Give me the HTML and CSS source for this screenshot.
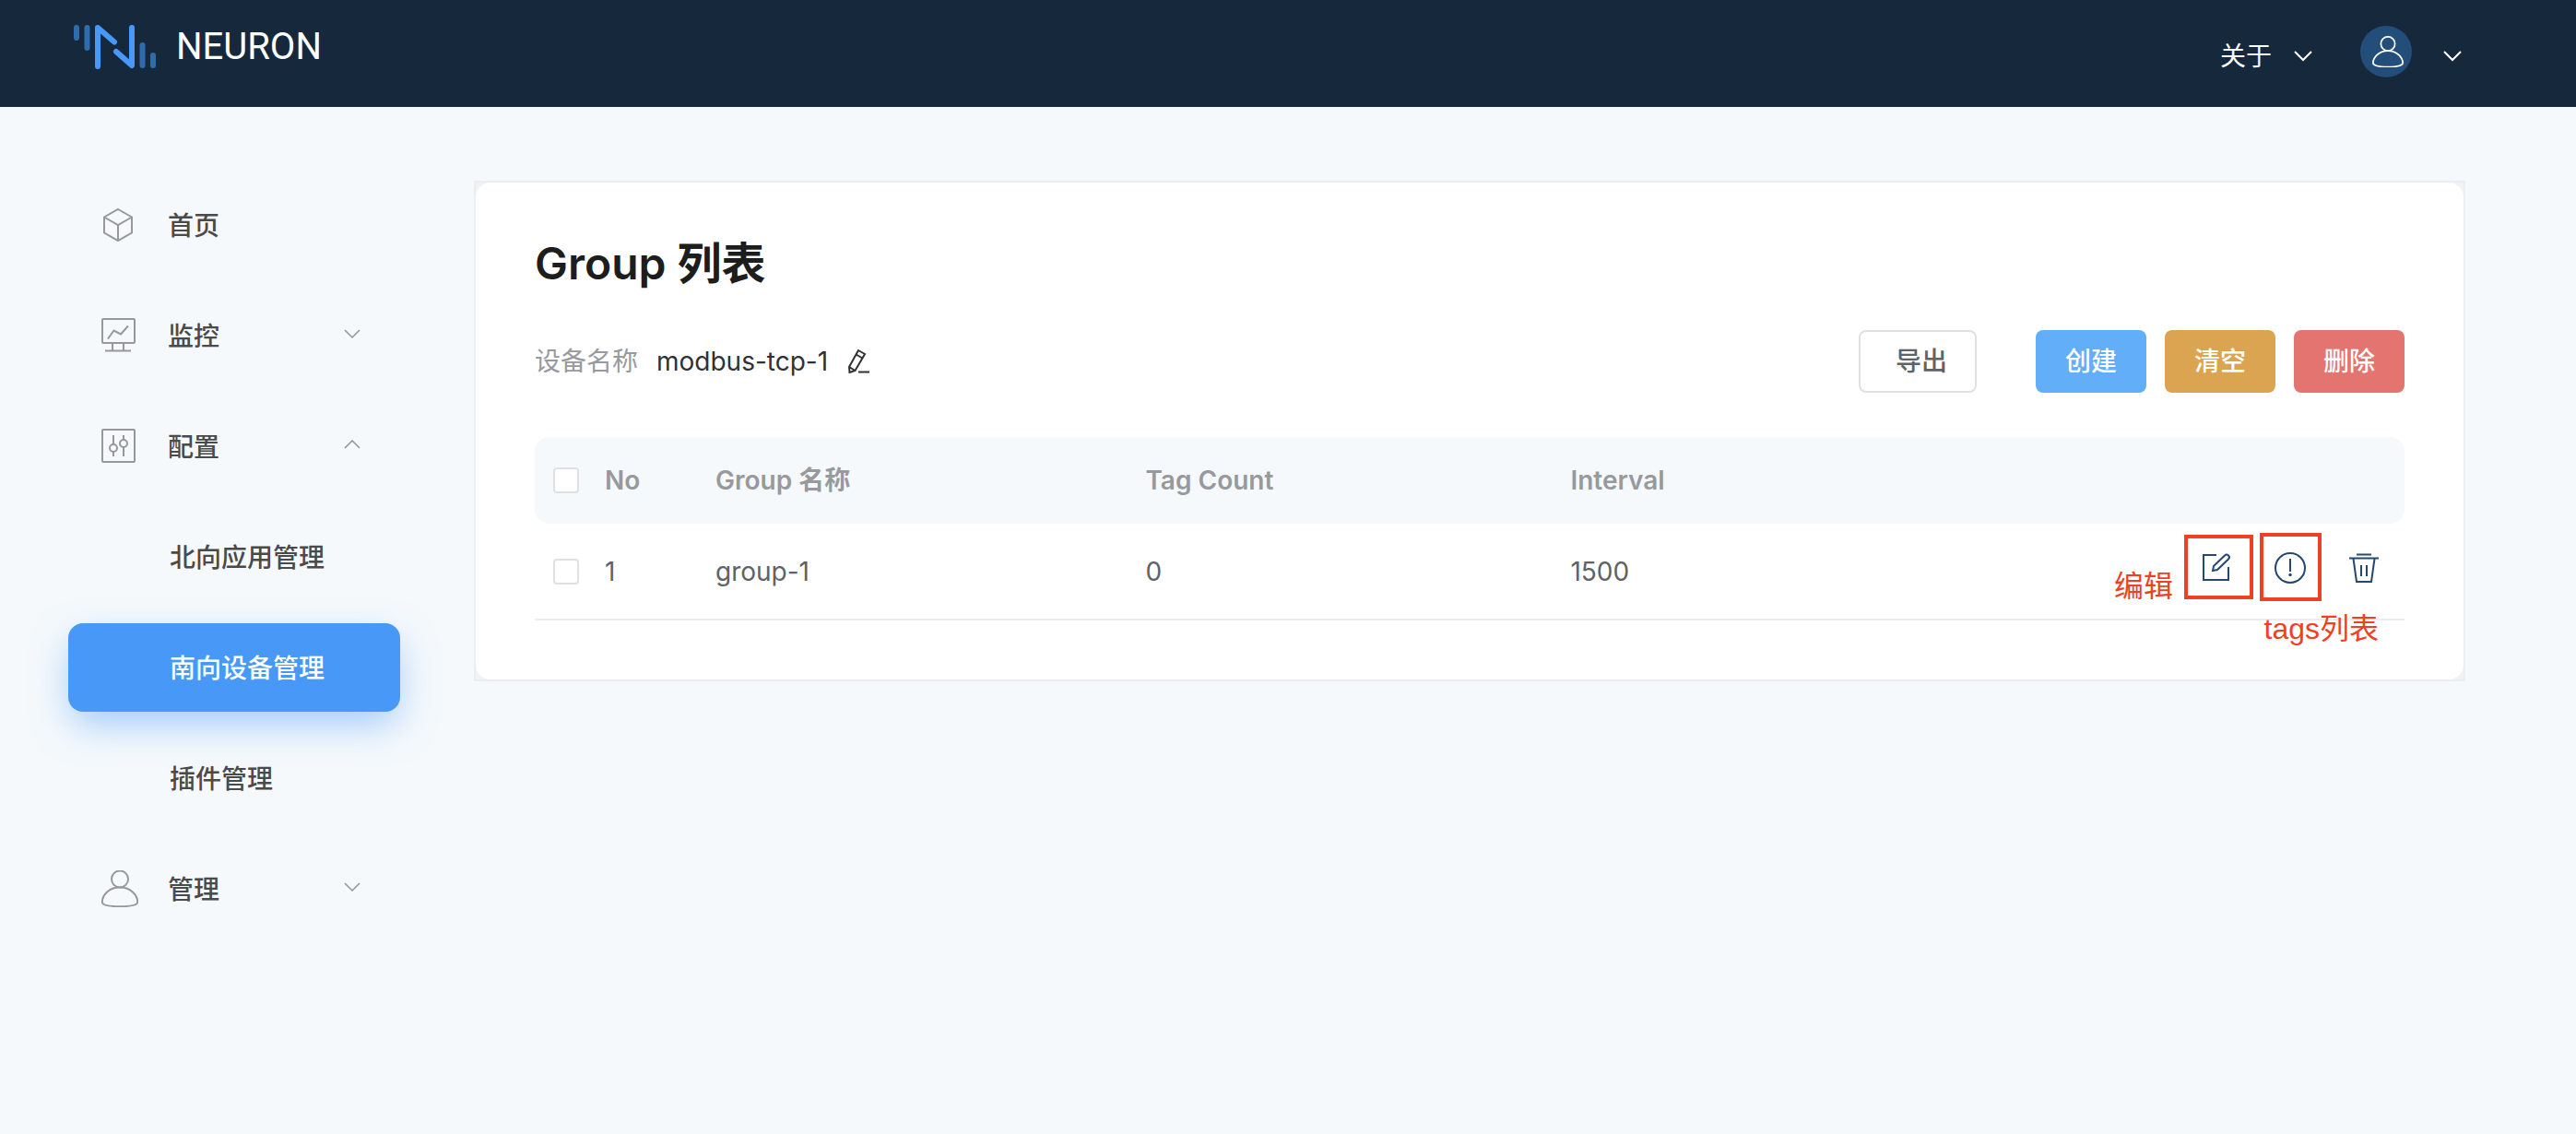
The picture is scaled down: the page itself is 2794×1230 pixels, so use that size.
FILE: index.html
```html
<!DOCTYPE html>
<html lang="zh-CN">
<head>
<meta charset="utf-8">
<meta name="viewport" content="width=device-width, initial-scale=1">
<title>Neuron</title>
<link rel="stylesheet" href="styles.css">
</head>
<body>
<header class="topbar">
  <a class="brand" href="#">
    <svg class="brand-mark" viewBox="0 0 90 48" fill="none" stroke-width="6" stroke-linecap="round" stroke-linejoin="round" aria-hidden="true">
      <path stroke="#306bab" d="M3 3v11M14.500 3v22M74.500 22v22M86 33v11"/>
      <path stroke="#4899f7" d="M26 45V3l18 15.500M46 29l17 15V3"/>
    </svg>
    <span>NEURON</span>
  </a>
  <div class="topbar-menus">
    <button class="menu-button about" type="button">关于
      <svg class="chevron" viewBox="0 0 20 12" aria-hidden="true"><path d="M1 1l9 9 9-9"/></svg>
    </button>
    <button class="menu-button account" type="button" aria-label="Account">
      <span class="avatar">
        <svg viewBox="0 0 40 40" aria-hidden="true"><circle cx="20" cy="10" r="9"/><path d="M20 19C8 19 1 28 1 34.500C1 37 6 39.500 20 39.500S39 37 39 34.500C39 28 32 19 20 19z"/></svg>
      </span>
      <svg class="chevron" viewBox="0 0 20 12" aria-hidden="true"><path d="M1 1l9 9 9-9"/></svg>
    </button>
  </div>
</header>
<div class="layout">
  <nav class="sidebar">
    <a class="nav-item" href="#">
      <svg class="nav-icon" viewBox="0 0 40 40" aria-hidden="true"><path d="M18 3l15 8.500v17L18 37 3 28.500v-17zM3 11.500L18 20l15-8.500M18 20v17"/></svg>
      <span>首页</span>
    </a>
    <a class="nav-item" href="#">
      <svg class="nav-icon" viewBox="0 0 40 40" aria-hidden="true"><rect x="1" y="2" width="35" height="26" rx="1"/><path d="M12 28v8.500h12V28M4 36.500h28M7 23.500l6.500-9 7.500 4 8-9"/></svg>
      <span>监控</span>
      <svg class="nav-chevron" viewBox="0 0 20 12" aria-hidden="true"><path stroke-width="1.5" d="M2 1l8 8 8-8"/></svg>
    </a>
    <a class="nav-item" href="#">
      <svg class="nav-icon" viewBox="0 0 40 40" aria-hidden="true"><rect x="1" y="2" width="35" height="35" rx="1"/><path d="M13 8v10M13 26v5M24 8v5M24 21v10"/><circle cx="13" cy="22" r="4"/><circle cx="24" cy="17" r="4"/></svg>
      <span>配置</span>
      <svg class="nav-chevron" viewBox="0 0 20 12" aria-hidden="true"><path stroke-width="1.5" d="M2 9l8-8 8 8"/></svg>
    </a>
    <a class="nav-item nav-child" href="#">北向应用管理</a>
    <a class="nav-item nav-child active" href="#" aria-current="page">南向设备管理</a>
    <a class="nav-item nav-child" href="#">插件管理</a>
    <a class="nav-item" href="#">
      <svg class="nav-icon" viewBox="0 0 40 40" aria-hidden="true"><circle cx="20" cy="9.500" r="9"/><path d="M20 18.500C8 18.500 .800 27 .800 34.500C.800 37.500 7 39.200 20 39.200S39.200 37.500 39.200 34.500C39.200 27 32 18.500 20 18.500z"/></svg>
      <span>管理</span>
      <svg class="nav-chevron" viewBox="0 0 20 12" aria-hidden="true"><path stroke-width="1.5" d="M2 1l8 8 8-8"/></svg>
    </a>
  </nav>
  <main class="card">
    <div class="card-body">
      <h1>Group 列表</h1>
      <div class="toolbar">
        <span class="device-label">设备名称</span>
        <span class="device-name">modbus-tcp-1</span>
        <button class="icon-button rename" type="button" aria-label="Rename">
          <svg viewBox="0 0 24 26" aria-hidden="true"><path d="M11 1l7 4-10.500 18-6 2-.500-6zM8.500 5.500l7 4M1 19l6.500 4M11 24.500h12"/></svg>
        </button>
        <div class="actions">
          <button class="btn btn-plain" type="button">导出</button>
          <button class="btn btn-primary" type="button">创建</button>
          <button class="btn btn-warning" type="button">清空</button>
          <button class="btn btn-danger" type="button">删除</button>
        </div>
      </div>
      <table>
        <colgroup><col class="col-check"><col class="col-no"><col class="col-name"><col class="col-count"><col><col class="col-ops"></colgroup>
        <thead>
          <tr>
            <th><input type="checkbox" aria-label="Select all"></th>
            <th>No</th><th>Group 名称</th><th>Tag Count</th><th>Interval</th><th></th>
          </tr>
        </thead>
        <tbody>
          <tr>
            <td><input type="checkbox" aria-label="Select group-1"></td>
            <td>1</td><td>group-1</td><td>0</td><td>1500</td>
            <td>
              <div class="row-ops">
                <button class="icon-button" type="button" aria-label="编辑">
                  <svg viewBox="0 0 36 36" aria-hidden="true"><path d="M18 4H4v27h27V17M14 21l1-5L27 4.500a2.500 2.500 0 0 1 4 4L19 20z"/></svg>
                </button>
                <button class="icon-button" type="button" aria-label="tags列表">
                  <svg viewBox="0 0 36 36" aria-hidden="true"><circle cx="18" cy="18" r="16"/><path d="M18 8v14"/><circle class="dot" cx="18" cy="25.500" r="1.700"/></svg>
                </button>
                <button class="icon-button" type="button" aria-label="删除">
                  <svg viewBox="0 0 36 36" aria-hidden="true"><path d="M10 3.500h16M2 7.500h32M6.500 8l3.500 25h16L29.500 8M15 15v12M21 15v12"/></svg>
                </button>
                <span class="mark mark-edit"></span>
                <span class="mark mark-tags"></span>
                <span class="note note-edit">编辑</span>
                <span class="note note-tags">tags列表</span>
              </div>
            </td>
          </tr>
        </tbody>
      </table>
    </div>
  </main>
</div>
</body>
</html>
```

FILE: styles.css
```css
* {
  box-sizing: border-box;
}

body {
  margin: 0;
  min-height: 100vh;
  background: #f5f9fc;
  color: #606266;
  font-family: Inter, "Noto Sans CJK SC", sans-serif;
  font-size: 28px;
  line-height: 40px;
}

a {
  color: inherit;
  text-decoration: none;
}

button {
  padding: 0;
  border: 0;
  background: none;
  color: inherit;
  font: inherit;
  cursor: pointer;
}

svg {
  display: block;
  flex: none;
  fill: none;
  stroke: currentColor;
  stroke-width: 2;
}

.topbar {
  display: flex;
  justify-content: space-between;
  align-items: center;
  height: 116px;
  padding: 0 124px 0 80px;
  background: #16283c;
  color: #fff;
}

.brand {
  display: flex;
  align-items: center;
  gap: 21px;
  padding-bottom: 14px;
  font-family: Roboto, sans-serif;
  font-size: 40px;
}

.brand-mark {
  width: 90px;
  height: 48px;
  stroke-width: 6;
}

.topbar-menus {
  display: flex;
  align-items: center;
  gap: 52px;
}

.menu-button {
  display: flex;
  align-items: center;
}

.about {
  gap: 24px;
  padding-top: 6px;
}

.account {
  gap: 34px;
}

.chevron {
  width: 20px;
  height: 12px;
}

.account .chevron {
  margin-top: 6px;
}

.avatar {
  display: grid;
  place-items: center;
  width: 56px;
  height: 56px;
  margin-bottom: 4px;
  padding-left: 4px;
  border-radius: 50%;
  background: #244e7a;
}

.avatar svg {
  width: 34px;
  height: 34px;
}

.layout {
  display: flex;
  align-items: flex-start;
  gap: 80px;
  padding: 80px 120px 80px 74px;
}

.sidebar {
  display: flex;
  flex: none;
  flex-direction: column;
  gap: 24px;
  width: 360px;
}

.nav-item {
  display: flex;
  align-items: center;
  height: 96px;
  padding: 2px 42px 0 36px;
  border-radius: 16px;
  color: #4a4a4a;
  font-weight: 500;
}

.nav-icon {
  width: 40px;
  height: 40px;
  margin-right: 32px;
  margin-bottom: 2px;
  color: #96989b;
}

.nav-chevron {
  width: 20px;
  height: 12px;
  margin-bottom: 4px;
  margin-left: auto;
  color: #909399;
}

.nav-child {
  padding-left: 110px;
}

.active {
  background: #4899f7;
  box-shadow: 0 16px 40px -4px rgb(72 153 247 / 50%);
  color: #fff;
}

.card {
  flex: 1;
  min-width: 0;
  border: 2px solid #ebedf3;
  background: #eff2f7;
}

.card-body {
  padding: 58px 64px 64px;
  border-radius: 16px;
  background: #fff;
}

h1 {
  margin: 0 0 42px;
  color: #1d1d1d;
  font-size: 48px;
  font-weight: 600;
  line-height: 60px;
}

.toolbar {
  display: flex;
  align-items: center;
  margin-bottom: 48px;
}

.device-label {
  margin-right: 20px;
  color: #98999c;
}

.device-name {
  margin-right: 22px;
  color: #303133;
}

.icon-button {
  display: grid;
  place-items: center;
}

.rename {
  color: #303133;
}

.rename svg {
  width: 24px;
  height: 26px;
}

.actions {
  display: flex;
  gap: 20px;
  margin-left: auto;
}

.btn {
  width: 120px;
  height: 68px;
  border-radius: 8px;
  color: #fff;
  font-weight: 500;
}

.btn-plain {
  width: 128px;
  margin-right: 44px;
  padding-left: 8px;
  border: 2px solid #dfdfe6;
  background: #fff;
  color: #606266;
}

.btn-primary {
  background: #62aef8;
}

.btn-warning {
  background: #dba450;
}

.btn-danger {
  background: #e47470;
}

table {
  width: 100%;
  border-spacing: 0;
  table-layout: fixed;
}

.col-check {
  width: 76px;
}

.col-no {
  width: 120px;
}

.col-name {
  width: 23%;
}

.col-count {
  width: 461px;
}

.col-ops {
  width: 320px;
}

th,
td {
  padding: 0;
  text-align: left;
}

th {
  height: 94px;
  background: #f5f9fc;
  color: #98999c;
  font-weight: 600;
}

td {
  height: 105px;
  border-bottom: 2px solid #ebedf3;
}

th:first-child {
  border-radius: 16px 0 0 16px;
}

th:last-child {
  border-radius: 0 16px 16px 0;
}

input[type="checkbox"] {
  display: block;
  width: 28px;
  height: 28px;
  margin: 0 0 0 20px;
  border: 2px solid #dfdfe6;
  border-radius: 4px;
  appearance: none;
  background: #fff;
}

.row-ops {
  position: relative;
  display: flex;
  justify-content: flex-end;
  gap: 40px;
  padding: 0 24px 8px 0;
  color: #24486f;
}

.row-ops .icon-button {
  width: 40px;
  height: 40px;
}

.row-ops svg {
  width: 36px;
  height: 36px;
}

.dot {
  fill: currentColor;
  stroke: none;
}

/* Callouts laid over the row's buttons */
.mark {
  position: absolute;
  border: 4px solid #ee4023;
}

.mark-edit {
  top: -16px;
  right: 164px;
  width: 75px;
  height: 70px;
}

.mark-tags {
  top: -18px;
  right: 90px;
  width: 67px;
  height: 74px;
}

.note {
  position: absolute;
  color: #ee4023;
  font-family: "Liberation Sans", "Noto Sans CJK SC", sans-serif;
  font-size: 32px;
  white-space: nowrap;
}

.note-edit {
  top: 20px;
  right: 251px;
}

.note-tags {
  top: 66px;
  right: 28px;
}
```
